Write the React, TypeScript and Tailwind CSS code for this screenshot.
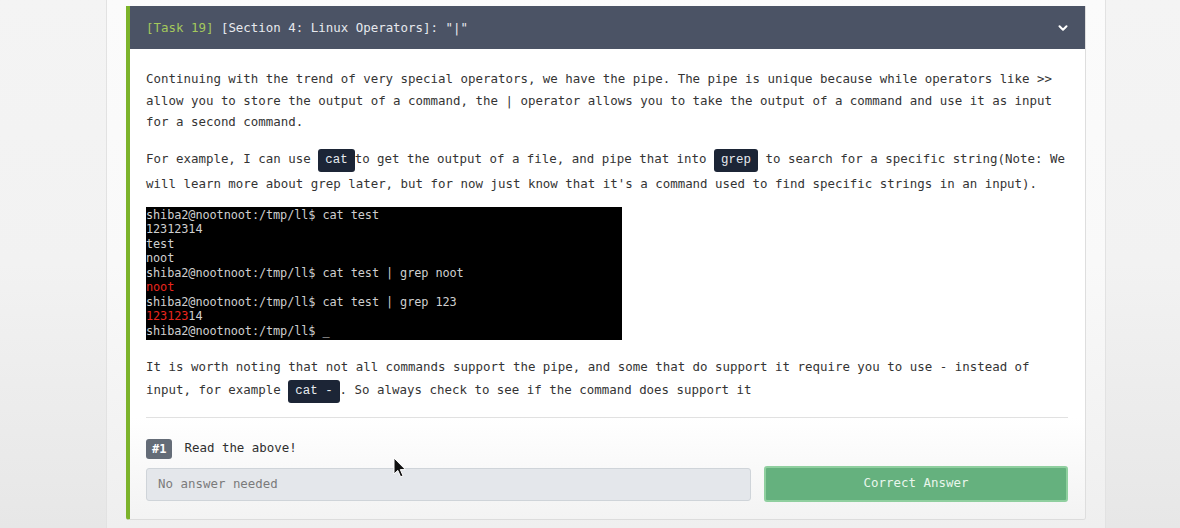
import { ChevronDown } from "lucide-react";

const mono = "font-['DejaVu_Sans_Mono','Liberation_Mono',monospace]";

function Code({ children }: { children: React.ReactNode }) {
  return (
    <code className="inline-block rounded-[3px] bg-[#1c2536] px-[7px] py-[3px] leading-[17px] text-[#e8ebf0]">
      {children}
    </code>
  );
}

const terminal: { text: string; red?: string; rest?: string }[] = [
  { text: "shiba2@nootnoot:/tmp/ll$ cat test" },
  { text: "12312314" },
  { text: "test" },
  { text: "noot" },
  { text: "shiba2@nootnoot:/tmp/ll$ cat test | grep noot" },
  { text: "", red: "noot" },
  { text: "shiba2@nootnoot:/tmp/ll$ cat test | grep 123" },
  { text: "", red: "123123", rest: "14" },
  { text: "shiba2@nootnoot:/tmp/ll$ _" },
];

function Cursor() {
  return (
    <svg className="pointer-events-none absolute left-[393px] top-[457px]" width="14" height="22" viewBox="0 0 14 22">
      <path d="M1 1 L1 17 L4.8 13.4 L7.6 19.8 L10 18.8 L7.3 12.6 L12.4 12.6 Z" fill="#111" stroke="#fff" strokeWidth="1" strokeLinejoin="round" />
    </svg>
  );
}

export default function App() {
  return (
    <div className={`relative min-h-screen bg-linear-to-b from-[#f4f4f4] via-[#f2f2f2] to-[#e7e7e7] ${mono}`}>
      <div className="ml-[106px] min-h-[528px] w-[1000px] border-x border-[#e2e2e2] bg-linear-to-b from-[#fbfbfb] via-[#f9f9f9] to-[#efefef] px-[19px] pt-[6px]">
        <div className="w-[960px] overflow-hidden rounded-b-[3px] border-l-4 border-r border-b border-l-[#7cb32b] border-r-[#dedede] border-b-[#dcdcdc]">
          <div className="flex h-[43px] items-center justify-between bg-[#4b5365] pl-[16px] pr-[15px] pt-[1px] text-[12.45px] text-[#e7e9ee]">
            <span>
              <span className="text-[#a4c95c]">[Task 19]</span> [Section 4: Linux Operators]: "|"
            </span>
            <ChevronDown className="h-[14px] w-[14px] text-white" strokeWidth={3.5} />
          </div>

          <div className="bg-white pl-[16px] pr-[17px] pt-[19px] text-[12.45px] leading-[21.5px] text-[#343434]">
            <p>
              Continuing with the trend of very special operators, we have the pipe. The pipe is unique because while operators like &gt;&gt; allow you to store the output of a command, the | operator allows you to take the output of a command and use it as input for a second command.
            </p>
            <p className="mt-[14px] leading-[24px]">
              For example, I can use <Code>cat</Code>to get the output of a file, and pipe that into <Code>grep</Code> to search for a specific string(Note: We will learn more about grep later, but for now just know that it's a command used to find specific strings in an input).
            </p>
            <div className="mt-[11px] h-[133px] w-[476px] bg-black pt-[1px] font-['DejaVu_Sans_Mono',monospace] text-[11.9px] leading-[14.5px] tracking-[-0.1px] text-[#cfcfcf]">
              {terminal.map((l, i) => (
                <div key={i} className="whitespace-pre">
                  {l.text}
                  {l.red && <span className="text-[#e8261e]">{l.red}</span>}
                  {l.rest}
                </div>
              ))}
            </div>
            <p className="mt-[15px] leading-[23px]">
              It is worth noting that not all commands support the pipe, and some that do support it require you to use - instead of input, for example <Code>cat -</Code>. So always check to see if the command does support it
            </p>
            <div className="mt-[14px] border-t border-[#e1e1e1]" />
          </div>

          <div className="bg-linear-to-b from-white to-[#f3f3f3] pb-[17px] pl-[16px] pr-[17px] pt-[21px] text-[12.45px]">
            <div className="flex items-center gap-[12px]">
              <span className="flex h-[20px] items-center rounded-[3px] bg-[#646c77] px-[6px] text-[12px] font-bold text-white">#1</span>
              <span className="text-[#2f2f2f]">Read the above!</span>
            </div>
            <div className="mt-[7px] flex items-start gap-[13px]">
              <div className="mt-[2px] flex h-[33px] flex-1 items-center rounded-[3px] border border-[#cfd4d9] bg-[#e4e7eb] px-[11px] text-[#7b7b7b]">
                No answer needed
              </div>
              <div className="flex h-[36px] w-[304px] items-center justify-center rounded-[3px] border-2 border-[#8fcf9f] bg-[#65b17e] text-[#e9f6ec]">
                Correct Answer
              </div>
            </div>
          </div>
        </div>
      </div>
      <Cursor />
    </div>
  );
}
